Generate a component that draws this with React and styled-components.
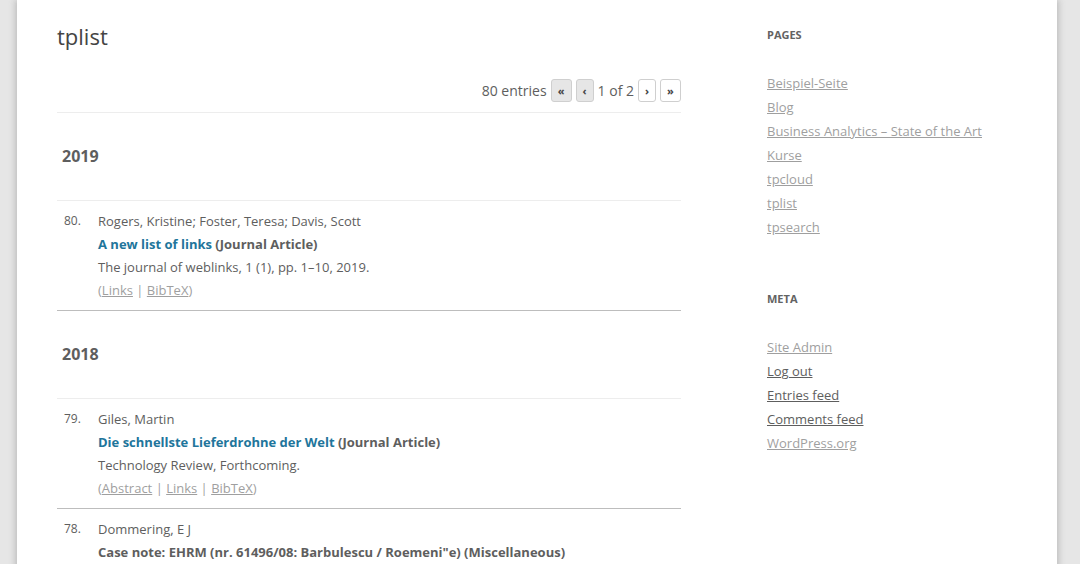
import styled, { createGlobalStyle } from 'styled-components';

const GlobalStyle = createGlobalStyle`
  html, body {
    margin: 0;
    padding: 0;
    background: #e6e6e6;
    font-family: "Open Sans", "Liberation Sans", sans-serif;
    color: #444;
  }
`;

const Page = styled.div`
  margin-left: 17px;
  width: 1040px;
  min-height: 100vh;
  background: #fff;
  box-shadow: rgba(100, 100, 100, 0.3) 0 2px 6px 2px;
  padding: 0 40px;
  box-sizing: border-box;
  display: flex;
  justify-content: space-between;
`;

const Main = styled.main`
  width: 624px;
  padding-top: 22px;
`;

const Title = styled.h1`
  margin: 0;
  font-size: 22px;
  line-height: 29px;
  font-weight: 400;
  color: #444;
`;

const Pager = styled.div`
  margin-top: 27px;
  padding-bottom: 10px;
  border-bottom: 1px solid #ededed;
  display: flex;
  justify-content: flex-end;
  align-items: center;
  gap: 4px;
  font-size: 14px;
  color: #5e5e5e;
  height: 24px;
`;

const PageButton = styled.span`
  display: inline-flex;
  align-items: center;
  justify-content: center;
  width: ${p => (p.$wide ? 21 : 18)}px;
  height: 23px;
  box-sizing: border-box;
  border: 1px solid #cfcfcf;
  border-radius: 3px;
  background: ${p => (p.$disabled ? '#e6e6e6' : '#fff')};
  font-size: 11px;
  font-weight: 700;
  color: #444;
  margin-top: 1px;
`;

const Year = styled.h3`
  margin: 0;
  padding: 31px 5px 32px;
  font-size: 16px;
  line-height: 24px;
  font-weight: 700;
  color: #5e5e5e;
  border-bottom: 1px solid #ededed;
`;

const Entry = styled.div`
  display: flex;
  padding: 9px 0 8px;
  border-bottom: ${p => (p.$last ? '1px solid #bdbdbd' : 'none')};
  font-size: 13px;
  line-height: 23px;
  color: #5e5e5e;
`;

const Num = styled.div`
  width: 34px;
  padding-left: 7px;
  font-size: 12px;
  line-height: 21px;
  flex-shrink: 0;
`;

const Body = styled.div`
  flex: 1;
`;

const PubTitle = styled.div`
  font-weight: 700;
`;

const TitleLink = styled.a`
  color: #21759b;
  text-decoration: none;
`;

const Links = styled.div`
  color: #9f9f9f;

  a {
    color: #9f9f9f;
    text-decoration: underline;
  }
`;

const Sidebar = styled.aside`
  width: 250px;
  padding-top: 25px;
`;

const Widget = styled.section`
  margin-bottom: 50px;
`;

const WidgetTitle = styled.h3`
  margin: 0 0 26px;
  font-size: 11px;
  line-height: 20px;
  font-weight: 700;
  text-transform: uppercase;
  color: #636363;
`;

const LinkList = styled.ul`
  list-style: none;
  margin: 0;
  padding: 0;
`;

const Item = styled.li`
  font-size: 13px;
  line-height: 24px;
`;

const SideLink = styled.a`
  color: ${p => (p.$dark ? '#5e5e5e' : '#9f9f9f')};
  text-decoration: underline;
`;

const pages = [
  'Beispiel-Seite',
  'Blog',
  'Business Analytics – State of the Art',
  'Kurse',
  'tpcloud',
  'tplist',
  'tpsearch',
];

const meta = [
  ['Site Admin', false],
  ['Log out', true],
  ['Entries feed', true],
  ['Comments feed', true],
  ['WordPress.org', false],
];

function LinkRow({ items }) {
  return (
    <Links>
      (
      {items.map((t, i) => (
        <span key={t}>
          {i > 0 && ' | '}
          <a href="#">{t}</a>
        </span>
      ))}
      )
    </Links>
  );
}

export default function App() {
  return (
    <>
      <GlobalStyle />
      <Page>
        <Main>
          <Title>tplist</Title>
          <Pager>
            <span>80 entries</span>
            <PageButton $disabled $wide>«</PageButton>
            <PageButton $disabled>‹</PageButton>
            <span>1 of 2</span>
            <PageButton>›</PageButton>
            <PageButton $wide>»</PageButton>
          </Pager>

          <Year>2019</Year>
          <Entry $last>
            <Num>80.</Num>
            <Body>
              <div>Rogers, Kristine; Foster, Teresa; Davis, Scott</div>
              <PubTitle>
                <TitleLink href="#">A new list of links</TitleLink> (Journal Article)
              </PubTitle>
              <div>The journal of weblinks, 1 (1), pp. 1–10, 2019.</div>
              <LinkRow items={['Links', 'BibTeX']} />
            </Body>
          </Entry>

          <Year>2018</Year>
          <Entry $last>
            <Num>79.</Num>
            <Body>
              <div>Giles, Martin</div>
              <PubTitle>
                <TitleLink href="#">Die schnellste Lieferdrohne der Welt</TitleLink> (Journal Article)
              </PubTitle>
              <div>Technology Review, Forthcoming.</div>
              <LinkRow items={['Abstract', 'Links', 'BibTeX']} />
            </Body>
          </Entry>
          <Entry>
            <Num>78.</Num>
            <Body>
              <div>Dommering, E J</div>
              <PubTitle>Case note: EHRM (nr. 61496/08: Barbulescu / Roemeni"e) (Miscellaneous)</PubTitle>
            </Body>
          </Entry>
        </Main>

        <Sidebar>
          <Widget>
            <WidgetTitle>Pages</WidgetTitle>
            <LinkList>
              {pages.map(p => (
                <Item key={p}>
                  <SideLink href="#">{p}</SideLink>
                </Item>
              ))}
            </LinkList>
          </Widget>
          <Widget>
            <WidgetTitle>Meta</WidgetTitle>
            <LinkList>
              {meta.map(([t, dark]) => (
                <Item key={t}>
                  <SideLink href="#" $dark={dark}>{t}</SideLink>
                </Item>
              ))}
            </LinkList>
          </Widget>
        </Sidebar>
      </Page>
    </>
  );
}
